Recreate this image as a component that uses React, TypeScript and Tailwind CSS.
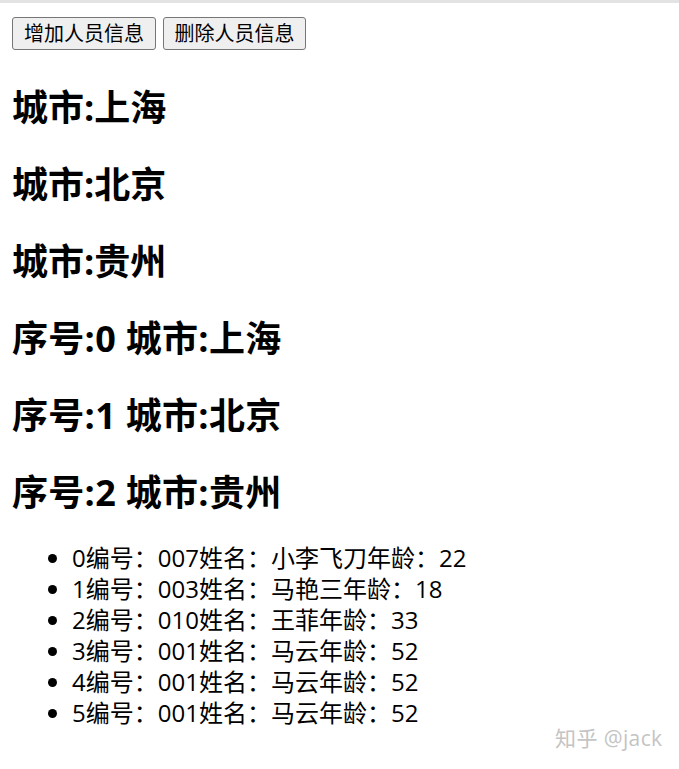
import React from "react";

const cities = ["上海", "北京", "贵州"];
const people = [
  { id: "007", name: "小李飞刀", age: 22 },
  { id: "003", name: "马艳三", age: 18 },
  { id: "010", name: "王菲", age: 33 },
  { id: "001", name: "马云", age: 52 },
  { id: "001", name: "马云", age: 52 },
  { id: "001", name: "马云", age: 52 },
];

const font = { fontFamily: '"Open Sans", "Noto Sans CJK SC", sans-serif' };

export default function App() {
  return (
    <div className="relative min-h-[769px] bg-white text-black" style={font}>
      <div className="h-[3px] w-full bg-[#e3e3e3]" />
      <div className="px-[12px] pt-[14px]">
        <div className="flex gap-[7px]">
          <button className="h-[33px] w-[144px] rounded-[3px] border border-[#767676] bg-[#efefef] text-[20px] leading-[31px] text-black">
            增加人员信息
          </button>
          <button className="h-[33px] w-[143px] rounded-[3px] border border-[#767676] bg-[#efefef] text-[20px] leading-[31px] text-black">
            删除人员信息
          </button>
        </div>
        <div className="mt-[34px] flex flex-col gap-[30px]">
          {cities.map((c) => (
            <h2 key={c} className="text-[36px] font-bold leading-[47px]">
              城市:{c}
            </h2>
          ))}
          {cities.map((c, i) => (
            <h2 key={"i" + c} className="text-[36px] font-bold leading-[47px] tracking-[0.3px]">
              序号:{i} 城市:{c}
            </h2>
          ))}
        </div>
        <ul className="mt-[26px] list-disc pl-[60px] text-[24px] leading-[31px]">
          {people.map((p, i) => (
            <li key={i}>
              {i}编号：{p.id}姓名：{p.name}年龄：{p.age}
            </li>
          ))}
        </ul>
      </div>
      <div className="absolute left-[555px] top-[724px] text-[21px] leading-[28px] tracking-[0.4px] text-[#c4c4c4]">
        知乎 @jack
      </div>
    </div>
  );
}
